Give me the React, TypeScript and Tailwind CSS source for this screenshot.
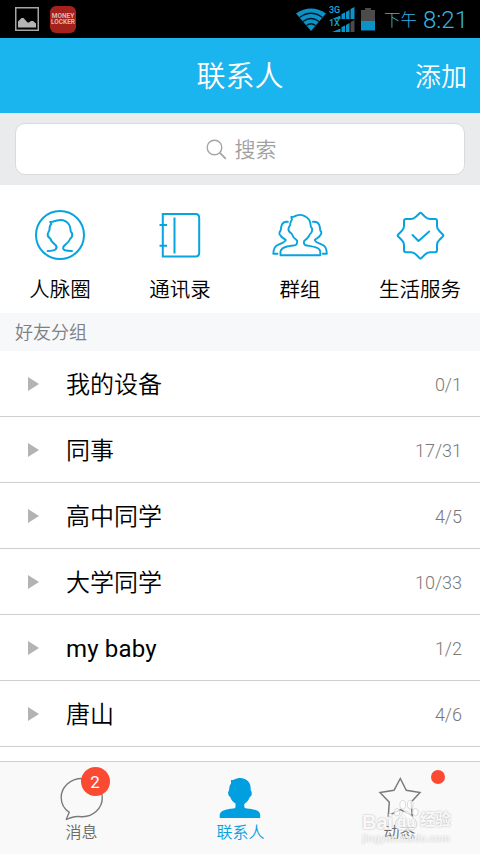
import type { ReactNode } from "react";

interface Group {
  name: string;
  count: string;
}

const groups: Group[] = [
  { name: "我的设备", count: "0/1" },
  { name: "同事", count: "17/31" },
  { name: "高中同学", count: "4/5" },
  { name: "大学同学", count: "10/33" },
  { name: "my baby", count: "1/2" },
  { name: "唐山", count: "4/6" },
];

function SignalBars({ label, last }: { label: string; last: string }) {
  return (
    <div className="relative h-[12px] w-[26px]">
      <svg width="26" height="12" viewBox="0 0 26 12" fill="#0a93c9">
        <path d="M3 12 11.500 8.500V12z" />
        <path d="M12.500 7 16 5.500V12h-3.500z" />
        <path d="M17 5 20.500 3v9H17z" />
        <path d="M21.500 2 25.500 0v12h-4z" fill={last} />
      </svg>
      <span className="absolute -top-[1px] left-0 text-[9px] leading-[9px] font-medium text-[#19a5dd]">{label}</span>
    </div>
  );
}

function StatusBar() {
  return (
    <div className="flex h-[38px] items-center bg-black">
      <svg className="ml-[15px]" width="24" height="24" viewBox="0 0 24 24">
        <rect x="0.750" y="0.750" width="22.500" height="22.500" fill="none" stroke="#a5a5a5" strokeWidth="1.500" />
        <path d="M3 20.500v-6l3.500-3.500h2l4 4.500h1.500l2-1.500h2l3 2.500v4z" fill="#b4b4b4" />
      </svg>
      <div className="ml-[11px] flex h-[27px] w-[26px] flex-col items-center justify-center rounded-[6px] bg-[#a5211c] text-[6.500px] leading-[6px] font-bold text-[#d9b8b5]">
        <span>MONEY</span>
        <span>LOCKER</span>
      </div>

      <svg className="ml-[220px]" width="30" height="23" viewBox="0 0 30 23" fill="none">
        <path d="M0 5.500Q15-4.500 30 5.500L15 23z" fill="#0a93c9" />
        <path d="M3.500 9.500Q15 1 26.500 9.500M7 13.500Q15 7.500 23 13.500M10.500 17.500Q15 14 19.500 17.500" stroke="#02161f" strokeWidth="1.300" />
      </svg>
      <div className="ml-[3px] flex h-[25px] w-[26px] flex-col gap-[1px]">
        <SignalBars label="3G" last="#0a93c9" />
        <SignalBars label="1X" last="#4b4b4b" />
      </div>
      <svg className="ml-[6px]" width="14" height="23" viewBox="0 0 14 23">
        <path d="M0 2h4V0h6v2h4v11H0z" fill="#4b4b4b" />
        <path d="M0 13h14v9.500H0z" fill="#0a93c9" />
      </svg>
      <span className="mt-[4px] ml-[9px] text-[16.500px] leading-[20px] font-light text-[#33b5e5]">下午</span>
      <span className="mt-[1px] ml-[6px] text-[24px] leading-[28px] font-[350] text-[#33b5e5]">8:21</span>
    </div>
  );
}

function CircleIcon() {
  return (
    <svg width="50" height="50" viewBox="0 0 50 50" fill="none" stroke="#08a4e0" strokeWidth="2" strokeLinecap="round" strokeLinejoin="round">
      <circle cx="25" cy="25" r="24" />
      <path d="M12.700 41C17 41 19 40.500 20.500 39.500C22 38 22 36.500 20.500 35C18 33 16 31.500 15.300 28.500C13 27 12.200 25 13 23C13.500 21.500 14.500 21 14.500 19.500C14.500 17 15 15 16.300 14L15.300 12C18 12 20 11 22 10.500C27 9.300 31.500 11 34 14.500C35.800 17 35 19.500 36 22C37.500 23 37.500 25 36.800 27C36.200 28 35 28.500 34.500 30C33.500 32.500 31 34 29 36C27.500 37.500 28 39.500 30 40.300C32 41 34.500 41 37 41" />
    </svg>
  );
}

function BookIcon() {
  return (
    <svg width="44" height="48" viewBox="0 0 44 48" fill="none" stroke="#08a4e0" strokeWidth="2">
      <path d="M4.800 3H37.500Q41.200 3 41.200 7V41.500Q41.200 45.500 37.500 45.500H4.800zM16.500 6.500V42.500M1.500 14H9M1.500 34.800H9" />
    </svg>
  );
}

function PeopleIcon() {
  return (
    <svg width="56" height="46" viewBox="0 0 56 46" fill="none" stroke="#08a4e0" strokeWidth="1.900" strokeLinecap="round" strokeLinejoin="round">
      <path d="M8.500 43.200V39.500C9 36.500 12 35.300 15 34.500C18.500 33.500 22 33.800 24 32.800C25.500 31.500 25.300 30 25 28.500C22.500 26.500 20.500 24.500 19.500 21.500C17 20 16 17.500 16.800 15.500C17.500 14 18.500 13.500 18.300 11.500C18.500 9.500 19.300 8.500 20 7.500L19.300 5C21 5.300 23 4 25 3.300C30 2 35 4.300 37.300 8C38.800 10.500 38.300 13 39 15C40.700 16.500 40.200 19 39.300 20.700C38 21.500 37.500 23 37 24C36 26 34 27.500 32.300 28.800C31.700 30.500 31.500 32 33 33C36.500 34 41 34 44.500 35.700C47 36.500 48.300 38.500 48.300 40.500V43.200z" />
      <path d="M15.800 9.800C13 9.500 11 10.500 10 12.500C9 14.500 9 16.500 8.700 18.500C7 20 7 22.500 8.500 23.500C9.500 25.500 12 26.500 13.800 28C13 30.500 9 31.200 6 32.800C2.500 34 1.500 37 1.300 41.700H5.500" />
      <path d="M41 9.800C44 9.500 46 10.500 47 12.500C48 14.500 48 16.500 48.300 18.500C50 20 49.500 22.500 48 23.500C47 25.500 44.500 26.500 42.800 28C43.500 30.500 47.500 31.200 50.500 32.800C54 34 54.700 37 54.800 41.700H50.800" />
    </svg>
  );
}

function ServiceIcon() {
  return (
    <svg width="49" height="49" viewBox="0 0 49 49" fill="none" stroke="#08a4e0" strokeWidth="2" strokeLinecap="round" strokeLinejoin="round">
      <path d="M23.500 2.200Q24.500 1.200 25.500 2.200L29 5.700Q31 8 34 8H39Q41 8 41 10V15Q41 18 43.300 20L46.800 23.500Q47.800 24.500 46.800 25.500L43.300 29Q41 31 41 34V39.300Q41 41.300 39 41.300H34Q31 41.300 29 43.500L25.500 47Q24.500 48 23.500 47L20 43.500Q18 41.300 15 41.300H10Q8 41.300 8 39.300V34Q8 31 5.700 29L2.200 25.500Q1.200 24.500 2.200 23.500L5.700 20Q8 18 8 15V10Q8 8 10 8H15Q18 8 20 5.700z" />
      <path d="M16.500 24 22.500 30 33.200 20.500" />
    </svg>
  );
}

const shortcuts: { label: string; icon: ReactNode }[] = [
  { label: "人脉圈", icon: <CircleIcon /> },
  { label: "通讯录", icon: <BookIcon /> },
  { label: "群组", icon: <PeopleIcon /> },
  { label: "生活服务", icon: <ServiceIcon /> },
];

function Watermark() {
  return (
    <div className="absolute top-[37px] left-[362px] w-[96px] font-['Liberation_Sans','Noto_Sans_CJK_SC',sans-serif] text-white/90">
      <div className="flex h-[34px] items-center text-[20px] leading-[24px] font-bold [text-shadow:0_0_2px_#aaa]">
        <span className="mt-[12px] w-[31px]">Bai</span>
        <div className="relative h-[34px] w-[26px]">
          <svg width="26" height="34" viewBox="0 0 27 36" fill="#fff" fillOpacity="0.750" stroke="#cfcfcf" strokeWidth="0.800">
            <ellipse cx="4" cy="14" rx="3" ry="4" />
            <ellipse cx="10" cy="6" rx="3" ry="4.500" />
            <ellipse cx="18" cy="6" rx="3" ry="4.500" />
            <ellipse cx="23.500" cy="14" rx="3" ry="4" />
            <path d="M13.500 13C9 13 9 18 5 21C0 25 2 33 8 33C11 33 16 33 19 33C25 33 27 25 22 21C18 18 18 13 13.500 13z" />
          </svg>
          <span className="absolute top-[13px] left-[4px] text-[15px] leading-[20px]">du</span>
        </div>
        <span className="mt-[8px] ml-[1px] text-[15.500px]">经验</span>
      </div>
      <div className="text-[10px] leading-[12px] font-bold text-white/70 [text-shadow:0_0_2px_#c4c4c4]">jingyan.baidu.com</div>
    </div>
  );
}

function TabBar() {
  return (
    <div className="relative flex h-[93px] border-t border-[#cfcfcf] bg-[#f9f9f9] text-[16px] leading-[20px] font-[350] text-[#6a6a6a]">
      <div className="flex w-[163px] flex-col items-center pt-[14px]">
        <div className="relative">
          <svg width="48" height="46" viewBox="0 0 48 46" fill="none" stroke="#7b7b7b" strokeWidth="1.400" strokeLinejoin="round">
            <path d="M11.300 36.300C5.500 32.500 3.200 27 3.200 21.500C3.200 11 12.500 2.500 24 2.500C35.500 2.500 44.300 11 44.300 21.500C44.300 32.500 35 41 24 40.700C21 40.300 19 40.300 16.500 40.700C13.500 41.300 11 42 8.300 43.500C9 41 9.800 39.800 11.300 36.300z" />
          </svg>
          <span className="absolute -top-[9px] left-[23px] flex size-[29px] items-center justify-center rounded-full bg-[#fa4b32] text-[17px] font-normal text-white">2</span>
        </div>
        <span className="mt-[1px]">消息</span>
      </div>
      <div className="flex w-[155px] flex-col items-center pt-[15px] text-[#08a0de]">
        <svg className="-ml-[2px]" width="44" height="45" viewBox="0 0 44 45" fill="#009fe0">
          <path d="M1.700 41V38C2 34.500 6 33 10 32.300C13 31.500 17 32 17.500 30.300V26.500C15 25 13 23 12.300 20C10 18.500 9.300 15.500 11 13.500C11.500 11 11 9 13 6.500L13 3C15.500 3.500 17 1.700 20 1.200C26.500 0 32 4 32.500 9.500L32.800 13.500C34.500 15.500 34 19 31.800 20C30.800 23 29 25 26.300 27V30.300C27.500 32 31 31.500 34.500 32.300C38.500 33 42 34.500 42.200 38V41z" />
        </svg>
        <span className="mt-[1px]">联系人</span>
      </div>
      <div className="flex w-[162px] flex-col items-center pt-[14px] pl-[1px]">
        <svg width="44" height="46" viewBox="0 0 44 46" fill="none" stroke="#7b7b7b" strokeWidth="1.500">
          <path d="M22.300 2.500 28.300 14.300 42 16.500 33 26.300 34.300 39.800 22.300 33.700 10.300 39.800 11.300 26.300 2 16.500 16 14.300z" />
        </svg>
        <span className="mt-[1px]">动态</span>
      </div>
      <span className="absolute top-[8px] left-[431px] size-[14px] rounded-full bg-[#fa4b32]" />
      <Watermark />
    </div>
  );
}

export default function App() {
  return (
    <div className="flex h-[854px] w-[480px] flex-col overflow-hidden bg-white font-[Roboto,'Noto_Sans_CJK_SC',sans-serif]">
      <StatusBar />

      <header className="grid h-[75px] grid-cols-[1fr_auto_1fr] items-center bg-[#1ab4ee] pt-[2px] font-[350] text-white">
        <span />
        <h1 className="text-[29px] leading-[40px]">联系人</h1>
        <button className="pr-[13px] text-right text-[26px] leading-[40px]">添加</button>
      </header>

      <div className="h-[72px] bg-[#eaebed] px-[15px] pt-[10px]">
        <div className="flex h-[52px] items-center justify-center rounded-[10px] border border-[#d9dadc] bg-white pl-[2px] text-[#a0a0a0]">
          <svg className="mr-[8px]" width="21" height="21" viewBox="0 0 21 21" fill="none" stroke="#a5a5a5" strokeWidth="1.400">
            <circle cx="8.500" cy="8.500" r="7.300" />
            <path d="M13.700 13.700 19.800 19.800" strokeWidth="1.800" />
          </svg>
          <span className="mt-[2px] text-[21px] leading-[28px] font-[350]">搜索</span>
        </div>
      </div>

      <div className="grid h-[128px] shrink-0 grid-cols-4">
        {shortcuts.map((item) => (
          <div key={item.label} className="flex flex-col items-center pt-[22px]">
            <div className="flex h-[56px] items-center">{item.icon}</div>
            <span className="mt-[12px] text-[20.500px] leading-[30px] font-[350] text-black">{item.label}</span>
          </div>
        ))}
      </div>

      <div className="h-[38px] shrink-0 bg-[#f7f8fa] pl-[15px] text-[18px] leading-[40px] font-[350] text-[#808080]">好友分组</div>

      <ul className="h-[410px] shrink-0 bg-white">
        {groups.map((group) => (
          <li key={group.name} className="flex h-[66px] items-center border-b border-[#cfcfd1] pr-[18px] pl-[28px]">
            <svg width="11" height="14" viewBox="0 0 11 14" fill="#b3b3b3">
              <path d="M0 0 11 7 0 14z" />
            </svg>
            <span className="mt-[1px] ml-[27px] flex-1 font-['Noto_Sans','Noto_Sans_CJK_SC',sans-serif] text-[24px] leading-[32px] font-[350] text-black">
              {/[a-z]/.test(group.name) ? <span className="font-[Roboto] font-normal tracking-[0.150px]">{group.name}</span> : group.name}
            </span>
            <span className="mt-[1px] text-[18px] font-[350] text-[#787878]">{group.count}</span>
          </li>
        ))}
      </ul>

      <TabBar />
    </div>
  );
}
